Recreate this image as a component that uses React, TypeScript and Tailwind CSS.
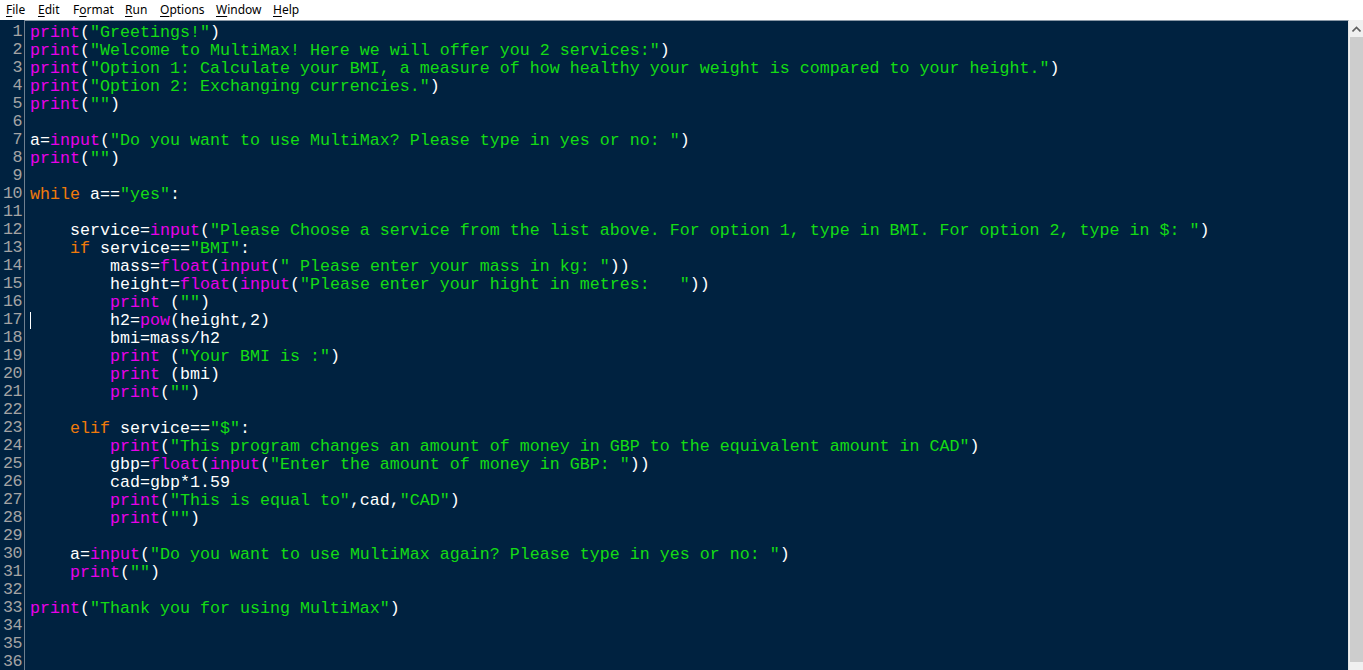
import React from "react";

type Tok = [string, string];
const W = "text-white";
const P = "text-[#e800e8]";
const S = "text-[#14dc14]";
const K = "text-[#f07a0a]";

const p = (s: string, ind = "", sp = ""): Tok[] => [
  [ind, W],
  ["print", P],
  [sp + "(", W],
  [s, S],
  [")", W],
];

const lines: Tok[][] = [
  p('"Greetings!"'),
  p('"Welcome to MultiMax! Here we will offer you 2 services:"'),
  p('"Option 1: Calculate your BMI, a measure of how healthy your weight is compared to your height."'),
  p('"Option 2: Exchanging currencies."'),
  p('""'),
  [],
  [["a=", W], ["input", P], ["(", W], ['"Do you want to use MultiMax? Please type in yes or no: "', S], [")", W]],
  p('""'),
  [],
  [["while", K], [" a==", W], ['"yes"', S], [":", W]],
  [],
  [["    service=", W], ["input", P], ["(", W], ['"Please Choose a service from the list above. For option 1, type in BMI. For option 2, type in $: "', S], [")", W]],
  [["    ", W], ["if", K], [" service==", W], ['"BMI"', S], [":", W]],
  [["        mass=", W], ["float", P], ["(", W], ["input", P], ["(", W], ['" Please enter your mass in kg: "', S], ["))", W]],
  [["        height=", W], ["float", P], ["(", W], ["input", P], ["(", W], ['"Please enter your hight in metres:   "', S], ["))", W]],
  p('""', "        ", " "),
  [["        h2=", W], ["pow", P], ["(height,2)", W]],
  [["        bmi=mass/h2", W]],
  p('"Your BMI is :"', "        ", " "),
  [["        ", W], ["print", P], [" (bmi)", W]],
  p('""', "        "),
  [],
  [["    ", W], ["elif", K], [" service==", W], ['"$"', S], [":", W]],
  p('"This program changes an amount of money in GBP to the equivalent amount in CAD"', "        "),
  [["        gbp=", W], ["float", P], ["(", W], ["input", P], ["(", W], ['"Enter the amount of money in GBP: "', S], ["))", W]],
  [["        cad=gbp*1.59", W]],
  [["        ", W], ["print", P], ["(", W], ['"This is equal to"', S], [",cad,", W], ['"CAD"', S], [")", W]],
  p('""', "        "),
  [],
  [["    a=", W], ["input", P], ["(", W], ['"Do you want to use MultiMax again? Please type in yes or no: "', S], [")", W]],
  p('""', "    "),
  [],
  p('"Thank you for using MultiMax"'),
  [],
  [],
  [],
];

const menus: { label: string; u: number; w: string }[] = [
  { label: "File", u: 0, w: "w-[32px]" },
  { label: "Edit", u: 0, w: "w-[35px]" },
  { label: "Format", u: 1, w: "w-[52px]" },
  { label: "Run", u: 0, w: "w-[35px]" },
  { label: "Options", u: 0, w: "w-[56px]" },
  { label: "Window", u: 0, w: "w-[57px]" },
  { label: "Help", u: 0, w: "w-[40px]" },
];

export default function App() {
  return (
    <div className="w-[1363px] h-[670px] overflow-hidden flex flex-col bg-white">
      <div
        className="h-[20px] flex items-center pl-[6px] text-[12px] text-black bg-white"
        style={{ fontFamily: '"Segoe UI", "Noto Sans", "Liberation Sans", sans-serif' }}
      >
        {menus.map((m) => (
          <div key={m.label} className={m.w + " leading-[20px]"}>
            {m.label.slice(0, m.u)}
            <span className="underline underline-offset-2">{m.label[m.u]}</span>
            {m.label.slice(m.u + 1)}
          </div>
        ))}
      </div>
      <div className="flex flex-1 min-h-0">
        <div
          className="flex flex-1 min-w-0 bg-[#002240] text-[16.667px] leading-[18px]"
          style={{ fontFamily: '"Liberation Mono", "Courier New", monospace' }}
        >
          <div className="w-[25px] pt-[3px] pr-[2px] text-right text-[#a4a4a4] border-r border-[#6f7f8f]">
            {lines.map((_, i) => (
              <div key={i} className="h-[18px] whitespace-pre tracking-[-0.5px]">
                {i + 1}
              </div>
            ))}
          </div>
          <div className="relative flex-1 pl-[5px] pt-[3px] border-t border-[#8a98a6] border-r border-r-[#e6e6e6] overflow-hidden">
            {lines.map((ln, i) => (
              <div key={i} className="h-[18px] whitespace-pre">
                {ln.map((t, j) => (
                  <span key={j} className={t[1]}>
                    {t[0]}
                  </span>
                ))}
              </div>
            ))}
            <div className="absolute left-[5px] top-[291px] w-[1px] h-[17px] bg-white" />
          </div>
        </div>
        <div className="w-[14px] flex flex-col bg-[#f0f0f0]">
          <div className="h-[17px] flex items-center justify-center">
            <svg width="9" height="6" viewBox="0 0 9 6">
              <path d="M0.5 5.5 L4.5 1.5 L8.5 5.5" stroke="#606060" strokeWidth="1.6" fill="none" />
            </svg>
          </div>
          <div className="h-[625px] bg-[#cdcdcd] ml-[1px]" />
          <div className="flex-1" />
        </div>
      </div>
    </div>
  );
}
